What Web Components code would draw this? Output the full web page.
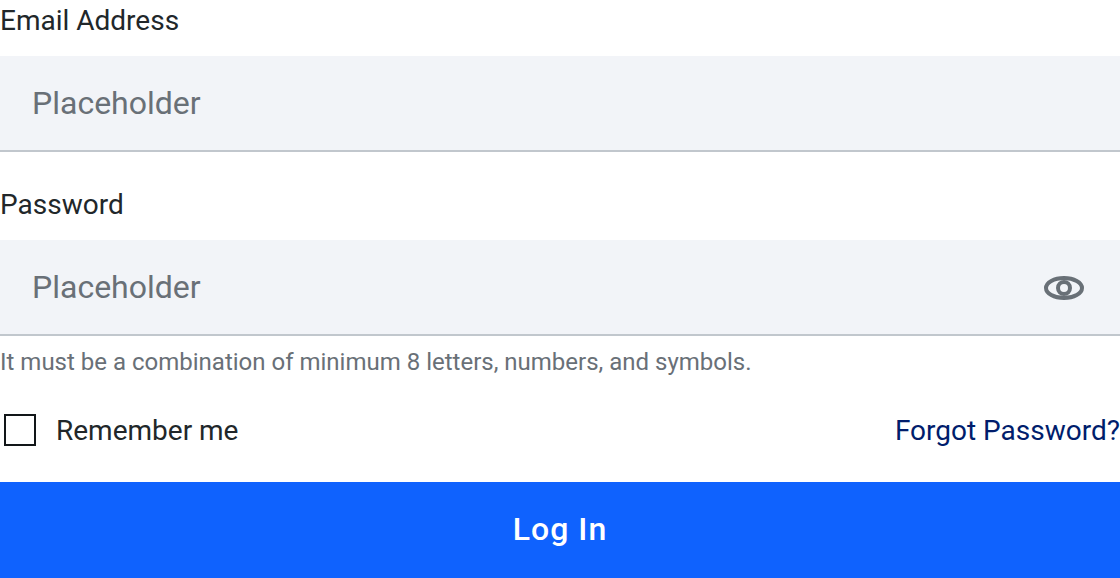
<!DOCTYPE html>
<html lang="en">
<head>
<meta charset="utf-8">
<meta name="viewport" content="width=device-width, initial-scale=1">
<title>Log In</title>
<style>
body { margin: 0; background: #fff; color: #21272a; font-family: Roboto, sans-serif; }
</style>
</head>
<body>
<login-form></login-form>
<script>
class TextField extends HTMLElement {
  constructor() {
    super();
    const type = this.getAttribute('type') || 'text';
    this.attachShadow({ mode: 'open' }).innerHTML = `
      <style>
        :host { display: flex; flex-direction: column; gap: 14px; }
        label { font-size: 28px; line-height: 42px; }
        .box { display: flex; align-items: center; height: 96px; box-sizing: border-box; padding: 0 32px;
               background: #f2f4f8; border-bottom: 2px solid #c1c7cd; }
        input { flex: 1; min-width: 0; padding: 0; border: 0; outline: 0; background: none;
                font: 32px/44px Roboto, sans-serif; color: #21272a; }
        input::placeholder { color: #697077; opacity: 1; }
      </style>
      <label for="control">${this.getAttribute('label')}</label>
      <div class="box"><input id="control" type="${type}" placeholder="Placeholder"><slot></slot></div>`;
  }
}
customElements.define('text-field', TextField);

class RevealButton extends HTMLElement {
  constructor() {
    super();
    this.attachShadow({ mode: 'open' }).innerHTML = `
      <style>
        :host { display: block; }
        button { display: block; padding: 2px 0 0; border: 0; background: none; color: #697077; }
        svg { display: block; width: 48px; height: 48px; }
      </style>
      <button type="button" aria-label="Show password">
        <svg viewBox="0 0 48 48" fill="none" stroke="currentColor" stroke-width="4">
          <ellipse cx="24" cy="24" rx="18" ry="10"/>
          <circle cx="24" cy="24" r="6"/>
        </svg>
      </button>`;
  }
}
customElements.define('reveal-button', RevealButton);

class CheckOption extends HTMLElement {
  constructor() {
    super();
    this.attachShadow({ mode: 'open' }).innerHTML = `
      <style>
        :host { display: block; }
        label { display: flex; align-items: flex-start; gap: 16px; font-size: 28px; line-height: 42px; }
        input { appearance: none; box-sizing: border-box; width: 32px; height: 32px; margin: 4px; border: 2px solid #121619; }
        input:checked { background: #0f62fe; }
      </style>
      <label><input type="checkbox"><span><slot></slot></span></label>`;
  }
}
customElements.define('check-option', CheckOption);

class LoginForm extends HTMLElement {
  constructor() {
    super();
    this.attachShadow({ mode: 'open' }).innerHTML = `
      <style>
        :host { display: block; }
        form { display: flex; flex-direction: column; gap: 30px; }
        .fields { display: flex; flex-direction: column; gap: 32px; }
        .group { display: flex; flex-direction: column; gap: 8px; }
        p { margin: 0; font-size: 24px; line-height: 36px; color: #697077; }
        .row { display: flex; align-items: center; justify-content: space-between; }
        a { font-size: 28px; line-height: 42px; color: #001d6c; text-decoration: none; }
        .submit { height: 96px; padding: 0 0 2px; border: 0; background: #0f62fe; color: #fff;
                  font: 500 32px/32px Roboto, sans-serif; letter-spacing: 1px; }
      </style>
      <form>
        <div class="fields">
          <text-field label="Email Address" type="email"></text-field>
          <div class="group">
            <text-field label="Password" type="password"><reveal-button></reveal-button></text-field>
            <p>It must be a combination of minimum 8 letters, numbers, and symbols.</p>
          </div>
        </div>
        <div class="row">
          <check-option>Remember me</check-option>
          <a href="#forgot">Forgot Password?</a>
        </div>
        <button class="submit" type="submit">Log In</button>
      </form>`;
  }
}
customElements.define('login-form', LoginForm);
</script>
</body>
</html>
